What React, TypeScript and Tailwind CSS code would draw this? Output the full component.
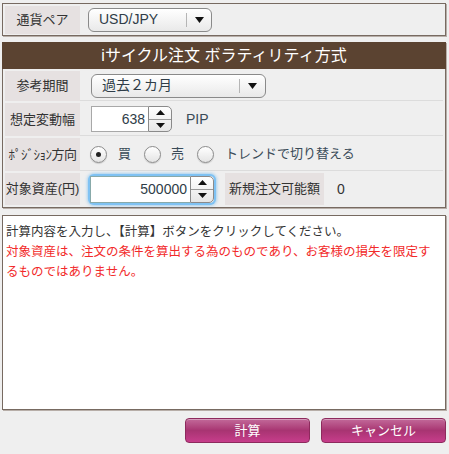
import React from "react";

const font = { fontFamily: '"Liberation Sans", "Noto Sans CJK JP", sans-serif' };

function Arrow() {
  return (
    <svg width="9" height="6" viewBox="0 0 9 6">
      <path d="M0 0 H9 L4.5 6 Z" fill="#111" />
    </svg>
  );
}

function Select({ text, width, divider }: { text: string; width: number; divider: number }) {
  return (
    <div
      className="relative h-[24px] rounded-[6px] border border-[#8a8a8a] bg-gradient-to-b from-white to-[#e9e9e9] shadow-[inset_0_1px_0_#fff] flex items-center text-[14px] text-[#2f3d48]"
      style={{ width }}
    >
      <span className="pl-[10px]">{text}</span>
      <div className="absolute top-[4px] bottom-[4px] w-px bg-[#b5b5b5]" style={{ left: divider }} />
      <div className="absolute top-0 bottom-0 right-0 flex items-center justify-center" style={{ left: divider + 1 }}>
        <Arrow />
      </div>
    </div>
  );
}

function Spinner({ h }: { h: number }) {
  return (
    <div
      className="w-[24px] border border-[#8a8a8a] rounded-r-[5px] bg-gradient-to-b from-white to-[#e6e6e6] flex flex-col"
      style={{ height: h }}
    >
      <div className="flex-1 flex items-center justify-center border-b border-[#9a9a9a]">
        <svg width="9" height="5" viewBox="0 0 9 5">
          <path d="M0 5 H9 L4.5 0 Z" fill="#111" />
        </svg>
      </div>
      <div className="flex-1 flex items-center justify-center">
        <svg width="9" height="5" viewBox="0 0 9 5">
          <path d="M0 0 H9 L4.5 5 Z" fill="#111" />
        </svg>
      </div>
    </div>
  );
}

function Radio({ checked }: { checked?: boolean }) {
  return (
    <div className="w-[17px] h-[17px] rounded-full border border-[#8c8c8c] bg-gradient-to-b from-white to-[#e4e4e4] flex items-center justify-center shadow-[0_1px_1px_rgba(0,0,0,0.15)]">
      {checked && <div className="w-[5px] h-[5px] rounded-full bg-[#222]" />}
    </div>
  );
}

function Label({ children, w = 75 }: { children: React.ReactNode; w?: number }) {
  return (
    <div
      className="h-full bg-[#e6e1e1] flex items-center justify-center text-[13px] text-[#333] shrink-0 whitespace-nowrap"
      style={{ width: w }}
    >
      {children}
    </div>
  );
}

function Row({ h, label, children, mt = 2 }: { h: number; label: React.ReactNode; children: React.ReactNode; mt?: number }) {
  return (
    <div className="flex" style={{ height: h, marginTop: mt }}>
      <Label>{label}</Label>
      <div className="flex-1 flex items-center border-b border-[#dcdcdc] mr-[2px]">{children}</div>
    </div>
  );
}

export default function App() {
  return (
    <div className="w-[449px] h-[454px] bg-[#efefef] pt-[3px] pl-[2px] pr-[3px]" style={font}>
      {/* top box */}
      <div className="h-[33px] border border-[#776a61] shadow-[1px_1px_0_#b7aea8] flex items-center pl-[2px]">
        <div className="h-[28px]">
          <Label>通貨ペア</Label>
        </div>
        <div className="ml-[8px]">
          <Select text="USD/JPY" width={124} divider={97} />
        </div>
      </div>

      {/* main box */}
      <div className="mt-[6px] border border-[#776a61] border-t-0 shadow-[1px_1px_0_#b7aea8] pl-[2px] pb-[2px]">
        <div className="-ml-[3px] -mr-[1px] h-[27px] bg-[#5b4331] text-white text-[16px] flex items-center justify-center">
          iサイクル注文 ボラティリティ方式
        </div>
        <Row h={30} label="参考期間">
          <div className="ml-[11px]">
            <Select text="過去２カ月" width={175} divider={147} />
          </div>
        </Row>
        <Row h={33} label="想定変動幅">
          <div className="ml-[11px] flex items-center">
            <div className="w-[57px] h-[26px] bg-white border border-[#a8a8a8] border-r-0 flex items-center justify-end pr-[3px] text-[14px] text-[#2f3d48]">
              638
            </div>
            <Spinner h={26} />
            <span className="ml-[14px] text-[14px] text-[#3a4b58]">PIP</span>
          </div>
        </Row>
        <Row h={33} label={<span className="text-[13px] tracking-[-0.5px]">ﾎﾟｼﾞｼｮﾝ方向</span>}>
          <div className="ml-[10px] flex items-center text-[13px] text-[#3a4b58]">
            <Radio checked />
            <span className="ml-[11px]">買</span>
            <div className="ml-[13px]">
              <Radio />
            </div>
            <span className="ml-[10px]">売</span>
            <div className="ml-[13px]">
              <Radio />
            </div>
            <span className="ml-[11px]">トレンドで切り替える</span>
          </div>
        </Row>
        <div className="flex h-[32px] mt-[2px]">
          <Label>対象資産(円)</Label>
          <div className="ml-[10px] flex items-center">
            <div className="flex items-center rounded-[4px] shadow-[0_0_0_2px_#7fc2f3,0_0_3px_3px_rgba(120,190,240,0.6)]">
              <div className="w-[100px] h-[27px] bg-white border border-[#8aa] border-r-0 flex items-center justify-end pr-[3px] text-[14px] text-[#2f3d48]">
                500000
              </div>
              <Spinner h={27} />
            </div>
          </div>
          <div className="ml-[11px] h-full">
            <Label w={99}>新規注文可能額</Label>
          </div>
          <span className="ml-[13px] self-center text-[14px] text-[#333]">0</span>
        </div>
      </div>

      {/* message area */}
      <div className="mt-[7px] h-[195px] bg-white border border-[#776a61] shadow-[1px_1px_0_#b7aea8] px-[3px] pt-[6px] text-[12.5px] leading-[20px]">
        <div className="text-[#333] whitespace-nowrap">計算内容を入力し、【計算】ボタンをクリックしてください。</div>
        <div className="text-[#f22a2a] whitespace-nowrap">
          対象資産は、注文の条件を算出する為のものであり、お客様の損失を限定す
          <br />
          るものではありません。
        </div>
      </div>

      {/* buttons */}
      <div className="mt-[8px] flex justify-end gap-[11px]">
        <button className="w-[125px] h-[25px] rounded-[4px] border border-[#8d2a5d] bg-gradient-to-b from-[#c2699a] via-[#a83472] to-[#c73d8b] text-white text-[13px] shadow-[inset_0_1px_0_rgba(255,255,255,0.35)]">
          計算
        </button>
        <button className="w-[125px] h-[25px] rounded-[4px] border border-[#8d2a5d] bg-gradient-to-b from-[#c2699a] via-[#a83472] to-[#c73d8b] text-white text-[13px] shadow-[inset_0_1px_0_rgba(255,255,255,0.35)]">
          キャンセル
        </button>
      </div>
    </div>
  );
}
